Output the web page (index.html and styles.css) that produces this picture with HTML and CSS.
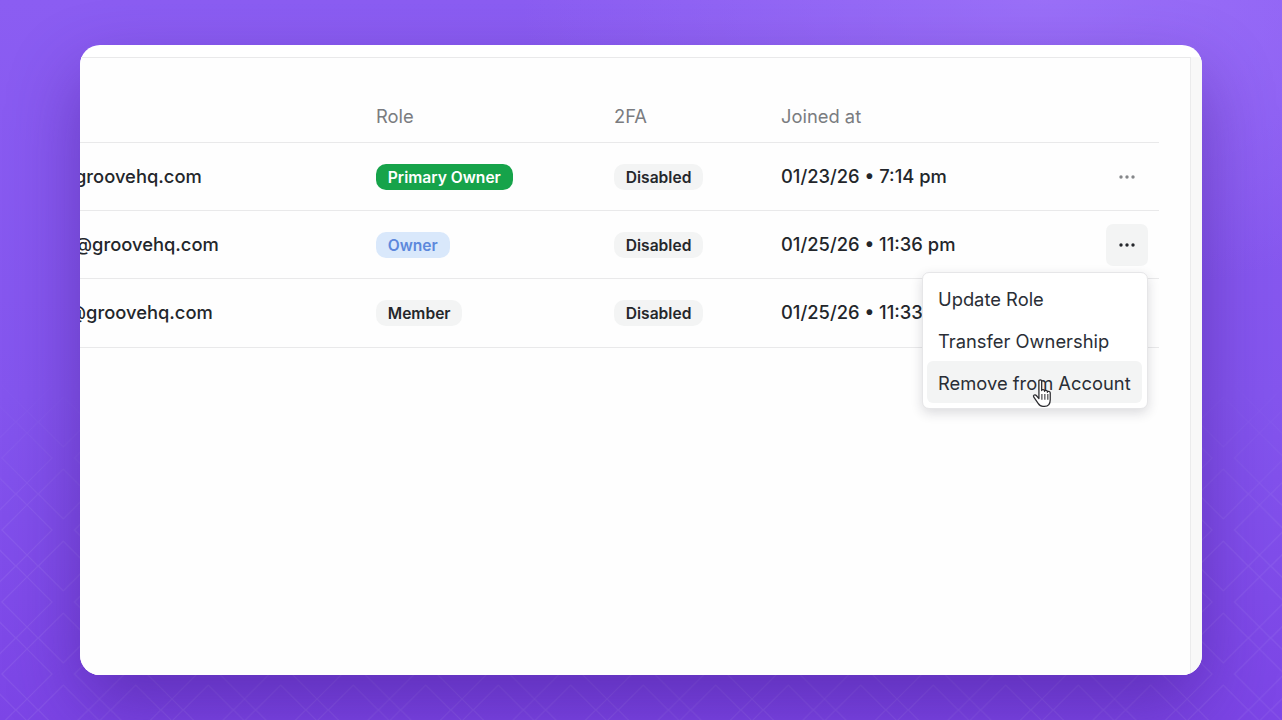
FILE: index.html
```html
<!DOCTYPE html>
<html lang="en">
<head>
<meta charset="utf-8">
<title>Team members</title>
<link rel="stylesheet" href="styles.css">
</head>
<body>
<svg class="pattern" width="1282" height="720" aria-hidden="true">
  <defs>
    <pattern id="tile" x="27" y="26" width="72.5" height="72" patternUnits="userSpaceOnUse">
      <path class="pattern-line" d="M-25 0L0 -25L25 0L0 25Z M47.500 0L72.500 -25L97.500 0L72.500 25Z M-25 72L0 47L25 72L0 97Z M47.500 72L72.500 47L97.500 72L72.500 97Z M11.250 36L36.250 11L61.250 36L36.250 61Z M-11 36L0 25L11 36L0 47Z M61.500 36L72.500 25L83.500 36L72.500 47Z"/>
    </pattern>
    <linearGradient id="fade" x1="0" y1="0" x2="0" y2="1">
      <stop offset="0.5" stop-color="#fff" stop-opacity="0"/>
      <stop offset="0.74" stop-color="#fff" stop-opacity="1"/>
    </linearGradient>
    <mask id="fadeMask"><rect width="1282" height="720" fill="url(#fade)"/></mask>
  </defs>
  <rect width="1282" height="720" fill="url(#tile)" mask="url(#fadeMask)"/>
</svg>
<main class="stage">
  <section class="card">
    <div class="panel">
      <div class="table">
        <div class="row head">
          <div class="cell email"></div>
          <div class="cell role">Role</div>
          <div class="cell tfa">2FA</div>
          <div class="cell joined">Joined at</div>
          <div class="cell actions"></div>
        </div>
        <div class="row">
          <div class="cell email"><span class="clip-a">groovehq.com</span></div>
          <div class="cell role"><span class="badge green">Primary Owner</span></div>
          <div class="cell tfa"><span class="badge grey">Disabled</span></div>
          <div class="cell joined">01/23/26 • 7:14 pm</div>
          <div class="cell actions"><button class="more"><svg width="18" height="4" viewBox="0 0 18 4"><circle cx="3" cy="2" r="1.7"/><circle cx="9" cy="2" r="1.7"/><circle cx="15" cy="2" r="1.7"/></svg></button></div>
        </div>
        <div class="row">
          <div class="cell email"><span class="clip-b">@groovehq.com</span></div>
          <div class="cell role"><span class="badge blue">Owner</span></div>
          <div class="cell tfa"><span class="badge grey">Disabled</span></div>
          <div class="cell joined">01/25/26 • 11:36 pm</div>
          <div class="cell actions"><button class="more open"><svg width="18" height="4" viewBox="0 0 18 4"><circle cx="3" cy="2" r="1.7"/><circle cx="9" cy="2" r="1.7"/><circle cx="15" cy="2" r="1.7"/></svg></button>
            <div class="menu">
              <div class="item">Update Role</div>
              <div class="item">Transfer Ownership</div>
              <div class="item active">Remove from Account</div>
              <svg class="cursor" width="23" height="32" viewBox="0 0 20 28"><path d="M6 2.600c0-1.300 2.400-1.300 2.400 0V11c0-1.200 2.500-1.200 2.500.2v.5c0-1.200 2.500-1.200 2.500.2v.6c0-1.200 2.500-1.100 2.500.5v6c0 3.200-1.500 5.800-5 5.800H9.500c-2 0-3.200-1.100-4.200-2.600L1.400 16.600c-.8-1.400 1.200-2.600 2.300-1.300L6 18Z" fill="#fff" stroke="#2b2b2f" stroke-width="1.100" stroke-linejoin="round"/><path d="M8.600 14v5M11.200 14v5M13.800 14v5" fill="none" stroke="#2b2b2f" stroke-width=".9"/></svg>
            </div>
          </div>
        </div>
        <div class="row">
          <div class="cell email"><span class="clip-c">@groovehq.com</span></div>
          <div class="cell role"><span class="badge grey">Member</span></div>
          <div class="cell tfa"><span class="badge grey">Disabled</span></div>
          <div class="cell joined">01/25/26 • 11:33 pm</div>
          <div class="cell actions"></div>
        </div>
      </div>
    </div>
  </section>
</main>
</body>
</html>
```
FILE: styles.css
```css
* { box-sizing: border-box; }
html, body { margin: 0; height: 100%; }
body {
  width: 1282px;
  height: 720px;
  overflow: hidden;
  position: relative;
  font-family: Inter, "Liberation Sans", sans-serif;
  color: #23262b;
  background:
    radial-gradient(ellipse 520px 300px at 1040px 0, rgba(170,130,255,.5), rgba(170,130,255,0) 100%),
    linear-gradient(180deg, #8b5df2 0%, #8455ee 55%, #7c45e6 100%);
}
.pattern { position: absolute; inset: 0; }
.pattern-line { fill: none; stroke: rgba(255,255,255,.07); stroke-width: 1.2; }
.stage {
  position: relative;
  height: 720px;
  padding: 45px 80px;
}
.card {
  height: 630px;
  background: #fff;
  border-radius: 20px;
  overflow: hidden;
  padding-top: 12px;
  box-shadow: 0 30px 70px rgba(60,20,130,.45);
}
.panel {
  height: 618px;
  margin-right: 11px;
  border-top: 1px solid #e9e9ea;
  border-right: 1px solid #ebebec;
  box-shadow: 11px 0 0 #f8f8f8;
  background: #fefefe;
}
.table { width: 1079px; }
.row {
  display: grid;
  grid-template-columns: 296px 238px 167px 1fr 89px;
  align-items: center;
  height: 68px;
  border-bottom: 1px solid #e9e9ea;
  font-size: 18.350px;
  font-weight: 450;
}
.row:last-child { height: 69px; }
.row.head {
  height: 85px;
  padding-top: 32px;
  color: #7a7c80;
  font-weight: 400;
}
.cell { min-width: 0; white-space: nowrap; }
.email, .joined { padding-bottom: 2px; }
.head .joined { padding-bottom: 0; }
.email { overflow: hidden; }
.email span { display: block; }
.clip-a { margin-left: -5px; }
.clip-b { margin-left: -6px; }
.clip-c { margin-left: -12px; }
.actions { position: relative; height: 42px; display: flex; justify-content: flex-end; }
.badge {
  display: inline-block;
  height: 26px;
  line-height: 27px;
  padding: 0 11.750px;
  border-radius: 10px;
  font-size: 15.600px;
  font-weight: 600;
  vertical-align: middle;
}
.green { background: #16a34a; color: #fff; }
.blue { background: #d9e8fb; color: #5d88dc; }
.grey { background: #f3f4f4; color: #25272b; }
.more {
  width: 42px;
  height: 42px;
  margin-right: 11px;
  border: 0;
  padding: 0;
  border-radius: 7px;
  background: transparent;
  display: flex;
  align-items: center;
  justify-content: center;
  fill: #85878a;
}
.more.open { background: #f3f4f4; fill: #25272b; }
.menu {
  position: absolute;
  top: 48px;
  right: 11px;
  width: 226px;
  height: 137px;
  padding: 4px 5px 5px 4px;
  background: #fff;
  border: 1px solid #e6e6e8;
  border-radius: 7px;
  box-shadow: 0 4px 12px rgba(30,30,50,.16);
  font-size: 18.350px;
  font-weight: 400;
  color: #2a2e36;
  z-index: 2;
}
.item {
  height: 42px;
  line-height: 44px;
  padding-left: 11px;
  border-radius: 6px;
}
.item.active { background: #f3f4f4; }
.cursor { position: absolute; left: 109px; top: 105px; }
```
